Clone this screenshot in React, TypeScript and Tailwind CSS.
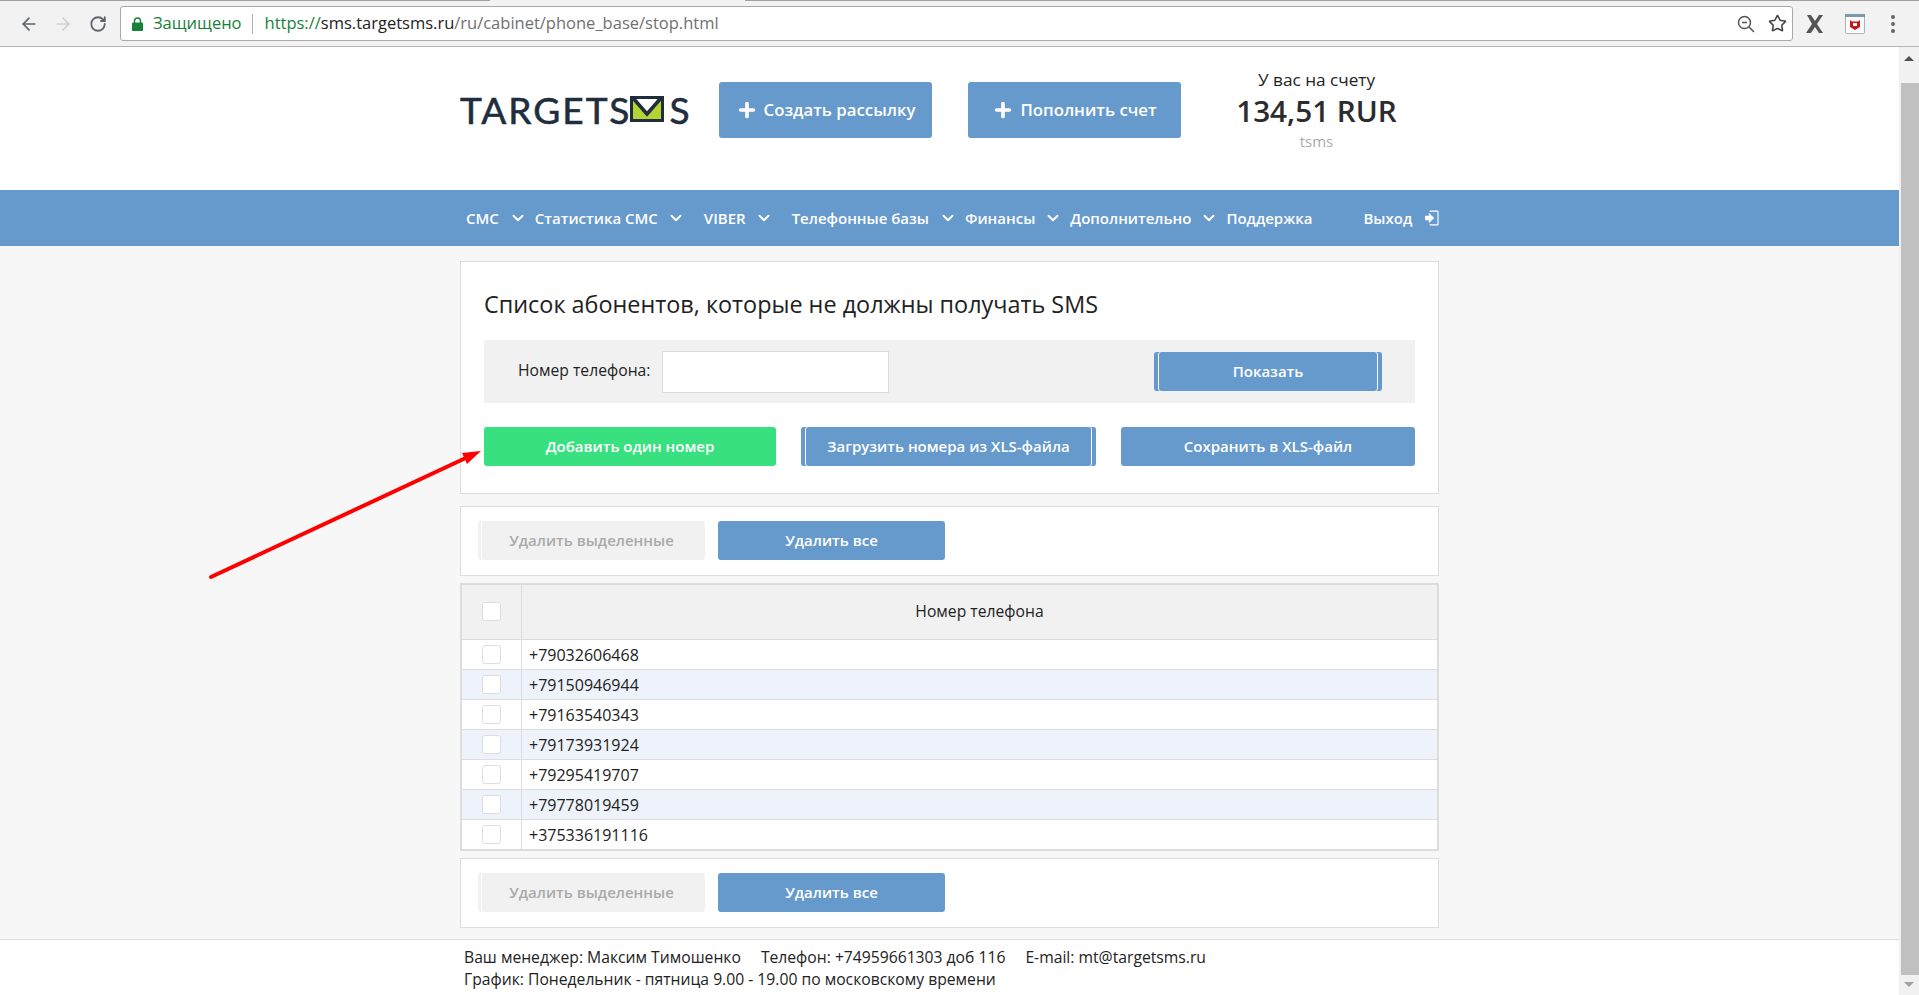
import { ArrowLeft, ArrowRight, ChevronDown, Plus, RotateCw, Star } from "lucide-react"

const phones = ["+79032606468", "+79150946944", "+79163540343", "+79173931924", "+79295419707", "+79778019459", "+375336191116"]

const navItems = [
  { label: "СМС", ml: "ml-0", arrow: "ml-[10px]" },
  { label: "Статистика СМС", ml: "ml-[8px]", arrow: "ml-[9px]" },
  { label: "VIBER", ml: "ml-[19px]", arrow: "ml-[9px]" },
  { label: "Телефонные базы", ml: "ml-[19px]", arrow: "ml-[10px]" },
  { label: "Финансы", ml: "ml-[8px]", arrow: "ml-[9px]" },
  { label: "Дополнительно", ml: "ml-[8px]", arrow: "ml-[9px]" },
]

const blueBtn = "flex items-center justify-center rounded-[3px] bg-[#6699cc] text-white text-[15px] font-semibold whitespace-nowrap"
const bothLines = "shadow-[inset_4px_0_0_#6699cc,inset_5px_0_0_#fff,inset_-4px_0_0_#6699cc,inset_-5px_0_0_#fff]"

function DeleteBar() {
  return (
    <div className="flex h-[70px] gap-[13px] border border-[#dcdcdc] bg-white pl-[17px] pt-[14px]">
      <button className="h-[39px] w-[227px] rounded-[3px] bg-[#f1f1f1] text-[15px] font-semibold text-[#aaaaaa] shadow-[inset_3px_0_0_#f1f1f1,inset_4px_0_0_#fff]">
        Удалить выделенные
      </button>
      <button className={`${blueBtn} h-[39px] w-[227px]`}>Удалить все</button>
    </div>
  )
}

function Checkbox() {
  return <div className="h-[19px] w-[19px] rounded-[3px] border border-[#dddddd] bg-white" />
}

export default function App() {
  return (
    <div className="relative flex h-[995px] flex-col overflow-hidden bg-white font-['Open_Sans',sans-serif] text-[#222222]">
      {/* browser chrome */}
      <div className="flex h-[47px] shrink-0 flex-col border-b border-[#b4b4b4] bg-[#f2f2f2]">
        <div className="flex h-px">
          <div className="w-[490px] bg-[#a0a0a0]" />
          <div className="w-[255px]" />
          <div className="flex-1 bg-[#a0a0a0]" />
        </div>
        <div className="flex flex-1 items-center">
          <ArrowLeft className="ml-[19px] h-[20px] w-[20px] text-[#5f6368]" strokeWidth={2} />
          <ArrowRight className="ml-[14px] h-[20px] w-[20px] text-[#cfcfcf]" strokeWidth={2} />
          <RotateCw className="ml-[16px] h-[18px] w-[18px] text-[#5f6368]" strokeWidth={2.4} />
          <div className="ml-[13px] flex h-[35px] w-[1673px] items-center rounded-[3px] border border-[#a9a9a9] bg-white">
            <svg className="ml-[11px] h-[14px] w-[11px]" viewBox="0 0 11 14">
              <path d="M2.5 6V4a3 3 0 0 1 6 0v2" fill="none" stroke="#188038" strokeWidth="1.4" />
              <rect x="0" y="5.5" width="11" height="8.5" rx="1" fill="#188038" />
            </svg>
            <span className="ml-[10px] text-[16.5px] text-[#188038]">Защищено</span>
            <div className="ml-[10px] h-[20px] w-px bg-[#b0b0b0]" />
            <span className="ml-[12px] text-[16.5px] text-[#707070]">
              <span className="text-[#188038]">https://</span>
              <span className="text-[#222222]">sms.targetsms.ru</span>/ru/cabinet/phone_base/stop.html
            </span>
            <svg className="ml-auto h-[18px] w-[18px]" viewBox="0 0 18 18" fill="none" stroke="#555" strokeWidth="1.5">
              <circle cx="7.5" cy="7.5" r="6" />
              <path d="M12 12l5 5M5 7.5h5" />
            </svg>
            <Star className="ml-[13px] mr-[5px] h-[19px] w-[19px] text-[#444444]" strokeWidth={2} />
          </div>
          <svg className="ml-[13px] h-[20px] w-[18px]" viewBox="0 0 18 20">
            <path d="M1 1h4l4 6 4-6h4l-6 9 6 9h-4l-4-6-4 6H0l6-9z" fill="#555555" />
          </svg>
          <svg className="ml-[21px] h-[20px] w-[20px]" viewBox="0 0 20 20">
            <rect x="0.5" y="0.5" width="19" height="19" rx="1" fill="#fff" stroke="#a8b4bc" />
            <rect x="0" y="0" width="20" height="3" fill="#7d98a8" />
            <path d="M5 6l2 1.5h6L15 6v7l-5 3-5-3z" fill="#c8151b" />
            <path d="M8 9h4v3H8z" fill="#fff" />
          </svg>
          <div className="ml-[26px] flex flex-col gap-[3px]">
            <div className="h-[4px] w-[4px] rounded-full bg-[#666666]" />
            <div className="h-[4px] w-[4px] rounded-full bg-[#666666]" />
            <div className="h-[4px] w-[4px] rounded-full bg-[#666666]" />
          </div>
        </div>
      </div>

      <div className="flex min-h-0 flex-1">
        <div className="flex min-w-0 flex-1 flex-col">
          {/* header */}
          <div className="flex h-[143px] shrink-0 justify-center">
            <div className="flex w-[979px] items-start">
              <div className="mt-[46px] flex h-[32px] w-[259px] items-center font-['Lato',sans-serif] text-[37px] leading-none tracking-[2px] text-[#1f2d3d] [-webkit-text-stroke:0.6px_#1f2d3d]">
                TARGETS
                <svg className="ml-[-1px] mr-[5px] h-[26px] w-[34px] shrink-0" viewBox="0 0 34 26">
                  <rect width="34" height="26" fill="#1f2d3d" />
                  <rect x="3" y="3" width="28" height="20" fill="#b5d334" />
                  <path d="M3 3h28L17 17z" fill="#ffffff" />
                  <path d="M3 2l14 16L31 2" fill="none" stroke="#1f2d3d" strokeWidth="3.5" />
                </svg>
                S
              </div>
              <button className={`${blueBtn} mt-[35px] h-[56px] w-[213px] text-[16.8px]`}>
                <Plus className="mr-[6px] h-[22px] w-[22px]" strokeWidth={4} />
                Создать рассылку
              </button>
              <button className={`${blueBtn} ml-[36px] mt-[35px] h-[56px] w-[213px] text-[16.8px]`}>
                <Plus className="mr-[6px] h-[22px] w-[22px]" strokeWidth={4} />
                Пополнить счет
              </button>
              <div className="ml-[37px] mt-[22px] flex w-[197px] flex-col items-center">
                <div className="text-[17.2px] leading-[22px]">У вас на счету</div>
                <div className="mt-[1px] text-[29.7px] font-semibold leading-[38px] text-[#2c2c2c]">134,51 RUR</div>
                <div className="text-[15px] leading-[22px] text-[#aaaaaa]">tsms</div>
              </div>
            </div>
          </div>

          {/* nav */}
          <div className="flex h-[56px] shrink-0 justify-center bg-[#6699cc]">
            <div className="flex w-[979px] items-center whitespace-nowrap pl-[6px] text-[15px] font-semibold text-white">
              {navItems.map((item) => (
                <div key={item.label} className={`flex items-center ${item.ml}`}>
                  <span>{item.label}</span>
                  <ChevronDown className={`${item.arrow} h-[18px] w-[18px]`} strokeWidth={2.6} />
                </div>
              ))}
              <span className="ml-[8px]">Поддержка</span>
              <span className="ml-[51px]">Выход</span>
              <svg className="ml-[13px] h-[22px] w-[18px]" viewBox="0 0 18 22" fill="none">
                <path d="M6 2h10a1 1 0 0 1 1 1v16a1 1 0 0 1-1 1H6" stroke="#fff" strokeWidth="1.5" />
                <path d="M0 8h5V4l7 7-7 7v-4H0z" fill="#fff" />
              </svg>
            </div>
          </div>

          {/* content */}
          <div className="flex min-h-0 flex-1 flex-col bg-[#f7f7f7]">
            <div className="mx-auto flex w-[979px] flex-col pt-[15px]">
              <div className="h-[233px] border border-[#dcdcdc] bg-white px-[23px]">
                <h1 className="flex h-[78px] items-center pt-[8px] text-[23.4px] font-normal text-[#222222]">
                  Список абонентов, которые не должны получать SMS
                </h1>
                <div className="flex h-[63px] items-center bg-[#f1f1f1] pl-[34px] pr-[33px]">
                  <label className="pb-[2px] text-[15.7px]">Номер телефона:</label>
                  <input className="ml-[12px] h-[42px] w-[227px] border border-[#dddddd] bg-white" />
                  <button className={`${blueBtn} ml-auto h-[39px] w-[228px] ${bothLines}`}>Показать</button>
                </div>
                <div className="mt-[24px] flex">
                  <button className="h-[39px] w-[292px] rounded-[3px] bg-[#38e07f] text-[15px] font-semibold text-white">
                    Добавить один номер
                  </button>
                  <button className={`${blueBtn} ml-[25px] h-[39px] w-[295px] ${bothLines}`}>
                    Загрузить номера из XLS-файла
                  </button>
                  <button className={`${blueBtn} ml-[25px] h-[39px] w-[294px]`}>Сохранить в XLS-файл</button>
                </div>
              </div>

              <div className="mt-[12px]">
                <DeleteBar />
              </div>

              <div className="mt-[7px] border-2 border-[#dddddd] bg-white">
                <div className="flex h-[55px] border-b border-[#dddddd] bg-[#f1f1f1]">
                  <div className="flex w-[60px] items-center justify-center border-r border-[#dddddd] pb-[1px]">
                    <Checkbox />
                  </div>
                  <div className="flex flex-1 items-center justify-center text-[15.7px]">Номер телефона</div>
                </div>
                {phones.map((phone, i) => (
                  <div
                    key={phone}
                    className={`flex ${i === phones.length - 1 ? "h-[29px]" : "h-[30px] border-b border-[#dddddd]"} ${i % 2 === 1 ? "bg-[#eef3fb]" : "bg-white"}`}
                  >
                    <div className="flex w-[60px] items-center justify-center border-r border-[#dddddd]">
                      <Checkbox />
                    </div>
                    <div className="flex flex-1 items-center pl-[7px] text-[16px]">{phone}</div>
                  </div>
                ))}
              </div>

              <div className="mt-[7px]">
                <DeleteBar />
              </div>
            </div>
          </div>

          {/* footer */}
          <div className="h-[56px] shrink-0 border-t border-[#dcdcdc] bg-white">
            <div className="mx-auto w-[979px] pl-[4px] pt-[6px] text-[15.7px] leading-[22px]">
              <div className="flex">
                <span>Ваш менеджер: Максим Тимошенко</span>
                <span className="ml-[20px]">Телефон: +74959661303 доб 116</span>
                <span className="ml-[20px]">E-mail: mt@targetsms.ru</span>
              </div>
              <div>График: Понедельник - пятница 9.00 - 19.00 по московскому времени</div>
            </div>
          </div>
        </div>

        {/* page scrollbar */}
        <div className="flex w-[20px] shrink-0 flex-col items-center bg-[#f1f1f1]">
          <div className="mt-[9px] h-0 w-0 border-x-[5px] border-b-[5px] border-x-transparent border-b-[#505050]" />
          <div className="ml-[2px] mt-[22px] h-[892px] w-[18px] bg-[#c0c0c0]" />
          <div className="mt-[7px] h-0 w-0 border-x-[5px] border-t-[5px] border-x-transparent border-t-[#a0a0a0]" />
        </div>
      </div>

      {/* annotation arrow drawn over the page */}
      <svg className="pointer-events-none absolute left-0 top-0 h-[995px] w-[1919px]" viewBox="0 0 1919 995">
        <path d="M211 577L470 456" stroke="#ff0000" strokeWidth="4" strokeLinecap="round" />
        <path d="M481 451L462 453L467 464Z" fill="#ff0000" />
      </svg>
    </div>
  )
}
